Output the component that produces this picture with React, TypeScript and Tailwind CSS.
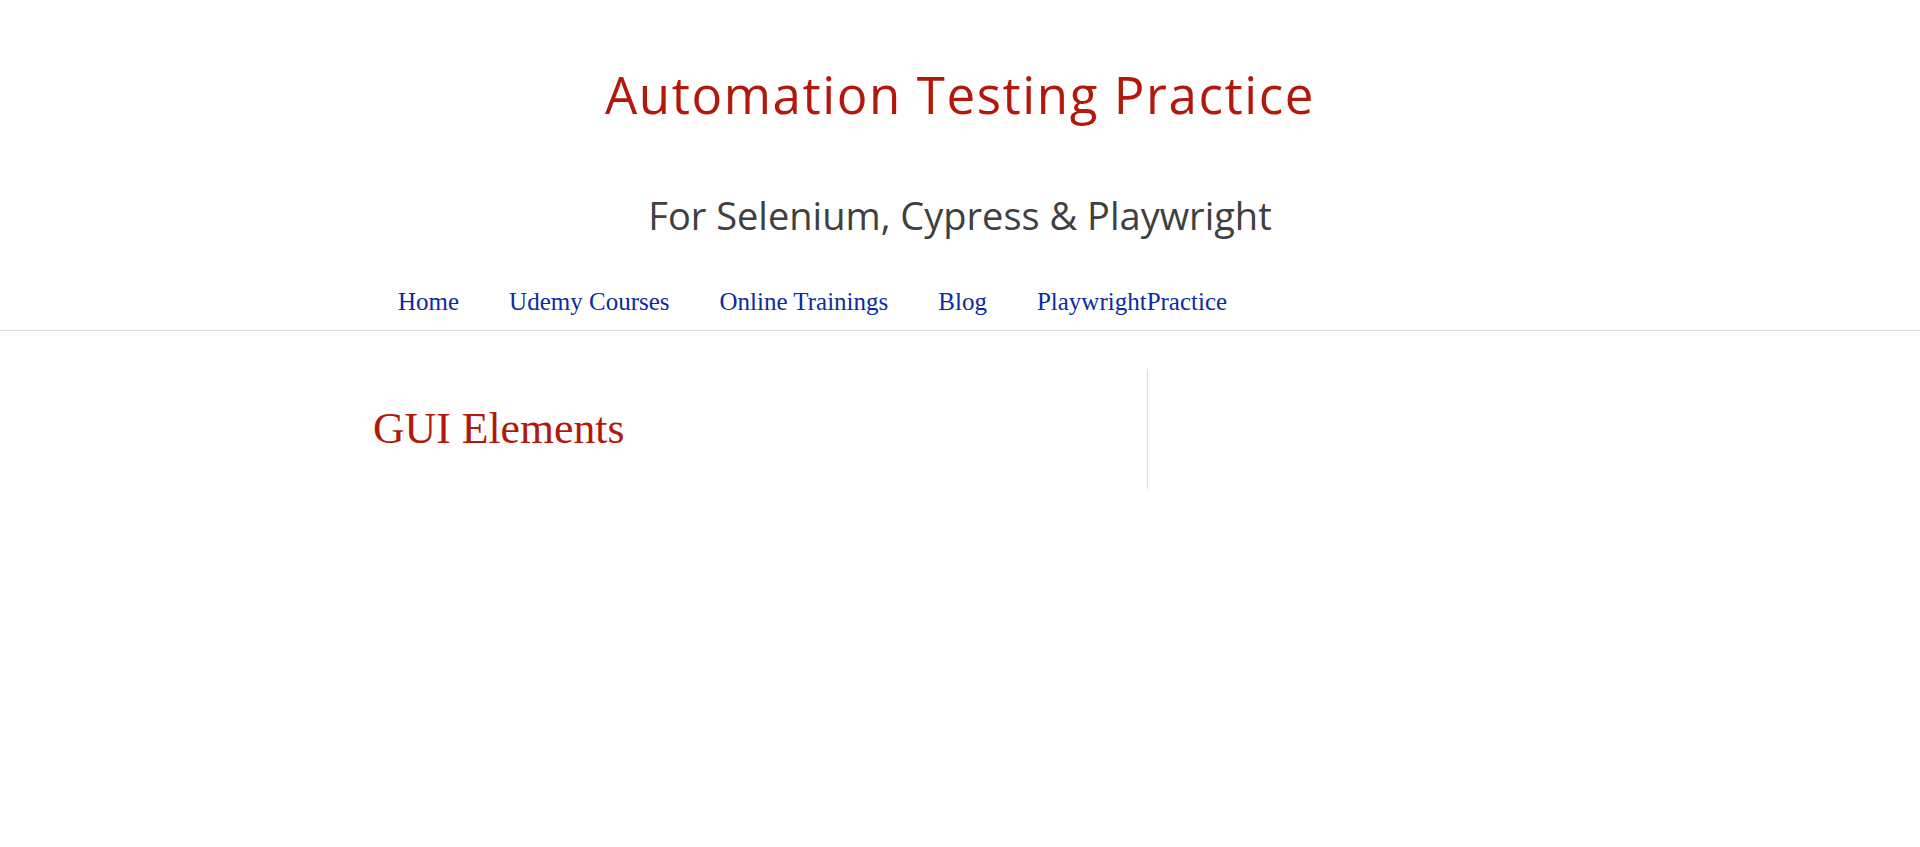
export default function App() {
  const links = ["Home", "Udemy Courses", "Online Trainings", "Blog", "PlaywrightPractice"];

  return (
    <div className="min-h-screen w-full bg-white">
      <header className="w-full">
        <div className="pt-[60px] text-center">
          <h1 className="text-[51px] leading-[68px] font-normal tracking-[1.6px] text-[#b3190b] font-['Open_Sans',sans-serif]">
            Automation Testing Practice
          </h1>
          <p className="mt-[63px] text-[38px] leading-[48px] text-[#404040] font-['Open_Sans',sans-serif]">
            For Selenium, Cypress &amp; Playwright
          </p>
        </div>

        <div className="mt-[47px] border-b border-[#dddddd]">
          <nav className="mx-auto flex w-[1174px] pb-[12px]">
            {links.map((l) => (
              <a
                key={l}
                href="#"
                className="px-[25px] text-[25px] leading-[32px] text-[#0a2ca0] font-['Liberation_Serif',serif]"
              >
                {l}
              </a>
            ))}
          </nav>
        </div>
      </header>

      <div className="mx-auto mt-[38px] flex w-[1174px]">
        <main className="h-[120px] w-[775px] border-r border-[#dddddd]">
          <h2 className="pt-[34px] text-[43.75px] leading-[50px] text-[#b3190b] font-['Liberation_Serif',serif]">
            GUI Elements
          </h2>
        </main>
        <aside className="flex-1" />
      </div>
    </div>
  );
}
